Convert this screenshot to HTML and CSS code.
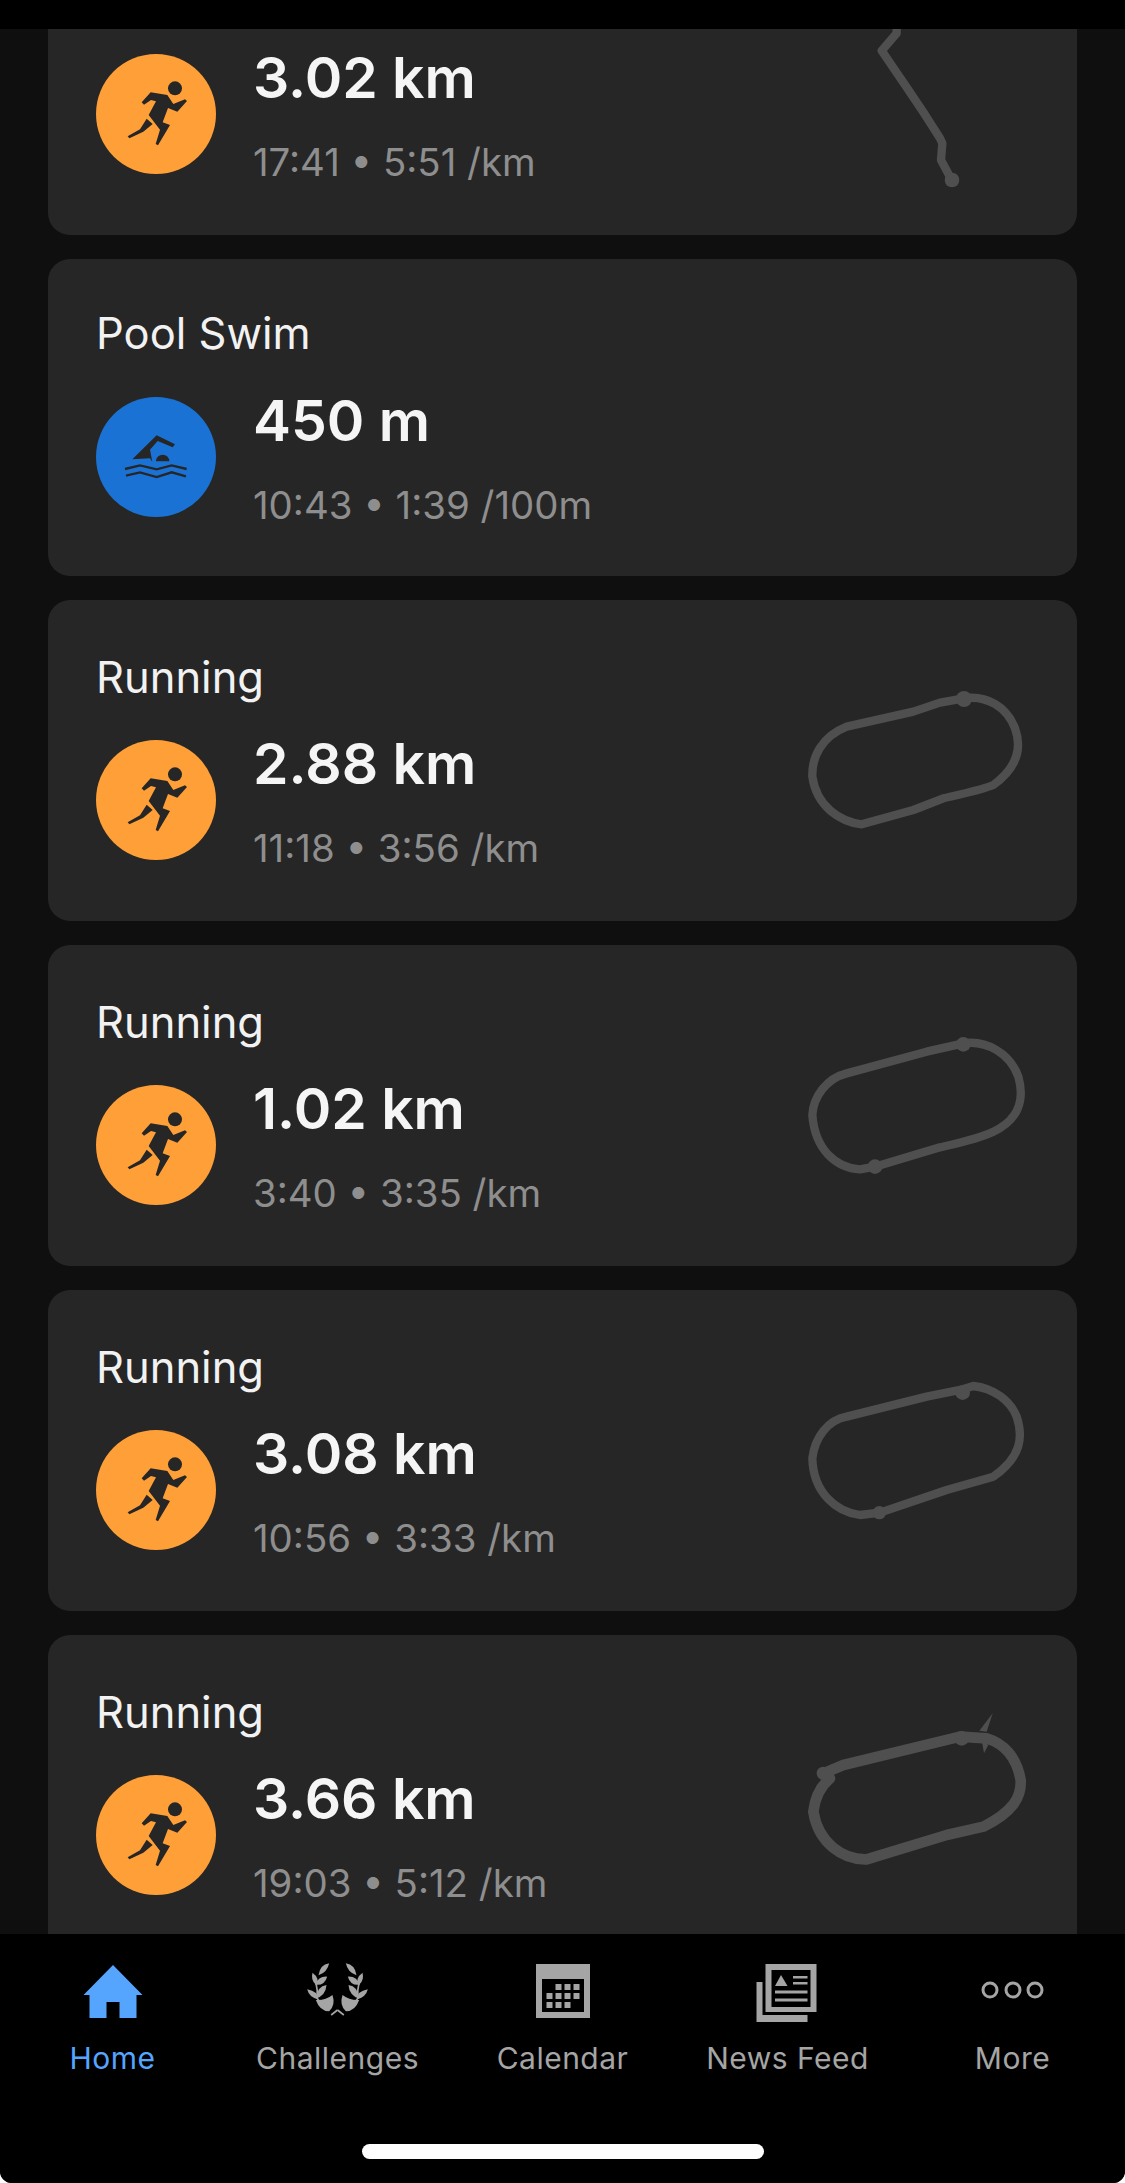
FILE: index.html
```html
<!DOCTYPE html>
<html lang="en">
<head>
    <meta charset="UTF-8">
    <meta name="viewport" content="width=device-width, initial-scale=1.0">
    <title>Activities</title>
    <link rel="stylesheet" href="styles.css">
</head>
<body>
    <svg class="defs" width="0" height="0" aria-hidden="true">
        <symbol id="runner" viewBox="18 30 360 360">
            <circle cx="255" cy="133" r="21"/>
            <path d="M155 175 L182 145 L232 153 L250 180 L285 166 L291 171 L262 203 L234 192 L218 235 L240 243 L204 304 L197 300 L210 257 L176 213 L198 172 L183 168 L162 182 Z"/>
            <path d="M170 224 L188 240 L160 263 L118 283 L113 277 L150 256 Z"/>
        </symbol>
        <symbol id="swimmer" viewBox="108 80 360 360">
            <path d="M217 267 L290 195 L345 222 L338 231 L293 212 L270 238 L277 275 L270 264 Z"/>
            <path d="M288 273 A20 20 0 0 1 328 273 Z"/>
            <path class="waves" d="M195 296 L240 285 L290 297 L335 285 L380 296 M198 316 L240 306 L290 320 L335 306 L378 318"/>
        </symbol>
        <g id="wreath-half">
            <path d="M116 40 Q88 44 84 76 Q110 68 116 40 Z"/>
            <path d="M66 68 Q60 90 76 104 Q90 86 66 68 Z"/>
            <path d="M110 80 Q84 78 74 104 Q102 108 110 80 Z"/>
            <path d="M50 118 Q56 142 82 148 Q84 124 50 118 Z"/>
            <path d="M108 105 Q80 108 76 146 Q106 136 108 105 Z"/>
            <path d="M126 135 Q104 152 76 150 Q88 184 116 184 Q136 165 126 135 Z"/>
            <path class="stem" d="M76 96 L80 120 L80 145 L95 165"/>
            <path class="stem" d="M122 195 L141 180"/>
        </g>
    </svg>

    <div class="app">
        <div class="status-bar"></div>

        <main class="feed">
            <div class="list">
                <article class="card card-first">
                    <div class="card-body">
                        <div class="badge badge-run"><svg><use href="#runner"/></svg></div>
                        <div class="stats">
                            <div class="distance">3.02 km</div>
                            <div class="meta">17:41 • 5:51 /km</div>
                        </div>
                    </div>
                    <svg class="route" viewBox="0 0 840 570">
                        <path d="M350 0 L350 178 L305 230 L380 340 L435 422 L480 493 L487 508 L483 558 L515 618"/>
                        <circle cx="516" cy="618" r="22"/>
                    </svg>
                </article>

                <article class="card card-swim">
                    <div class="card-title">Pool Swim</div>
                    <div class="card-body">
                        <div class="badge badge-swim"><svg><use href="#swimmer"/></svg></div>
                        <div class="stats">
                            <div class="distance">450 m</div>
                            <div class="meta">10:43 • 1:39 /100m</div>
                        </div>
                    </div>
                </article>

                <article class="card">
                    <div class="card-title">Running</div>
                    <div class="card-body">
                        <div class="badge badge-run"><svg><use href="#runner"/></svg></div>
                        <div class="stats">
                            <div class="distance">2.88 km</div>
                            <div class="meta">11:18 • 3:56 /km</div>
                        </div>
                    </div>
                    <svg class="route" viewBox="0 0 840 570">
                        <path d="M552 115 C620 105 680 140 705 205 C725 260 715 320 640 375 C600 392 540 402 490 415 L400 450 L245 493 C180 485 110 440 97 350 C95 290 125 230 200 200 L400 155 L480 128 Z"/>
                        <circle cx="552" cy="117" r="24"/>
                    </svg>
                </article>

                <article class="card">
                    <div class="card-title">Running</div>
                    <div class="card-body">
                        <div class="badge badge-run"><svg><use href="#runner"/></svg></div>
                        <div class="stats">
                            <div class="distance">1.02 km</div>
                            <div class="meta">3:40 • 3:35 /km</div>
                        </div>
                    </div>
                    <svg class="route" viewBox="0 -15 840 570">
                        <path d="M550 100 C620 90 690 130 715 200 C735 270 715 330 640 365 C600 385 540 398 480 412 L285 470 L240 478 C170 475 105 420 97 315 C100 260 140 205 200 190 L440 125 Z"/>
                        <circle cx="550" cy="103" r="22"/>
                        <circle cx="285" cy="470" r="22"/>
                    </svg>
                </article>

                <article class="card">
                    <div class="card-title">Running</div>
                    <div class="card-body">
                        <div class="badge badge-run"><svg><use href="#runner"/></svg></div>
                        <div class="stats">
                            <div class="distance">3.08 km</div>
                            <div class="meta">10:56 • 3:33 /km</div>
                        </div>
                    </div>
                    <svg class="route" viewBox="0 0 840 570">
                        <path d="M548 118 L580 108 C640 115 690 150 710 200 C730 260 725 320 640 380 L500 420 L300 488 L240 495 C170 485 100 430 97 325 C105 260 145 210 200 200 L440 140 Z"/>
                        <circle cx="548" cy="128" r="22"/>
                        <circle cx="298" cy="488" r="20"/>
                    </svg>
                </article>

                <article class="card">
                    <div class="card-title">Running</div>
                    <div class="card-body">
                        <div class="badge badge-run"><svg><use href="#runner"/></svg></div>
                        <div class="stats">
                            <div class="distance">3.66 km</div>
                            <div class="meta">19:03 • 5:12 /km</div>
                        </div>
                    </div>
                    <svg class="route route-thick" viewBox="0 15 840 570">
                        <path d="M130 250 L190 225 L540 140 L620 145 C670 160 710 200 722 270 C725 320 700 365 610 410 L500 435 L260 508 C190 510 115 460 100 365 C105 320 120 290 150 265 Z"/>
                        <circle cx="130" cy="250" r="20"/>
                        <circle cx="545" cy="145" r="22"/>
                        <polygon points="638,70 620,125 598,122"/>
                        <polygon points="605,150 612,190 625,165"/>
                    </svg>
                </article>
            </div>
        </main>

        <nav class="tabbar">
            <div class="tabs">
                <a class="tab tab-active">
                    <svg class="tab-icon" viewBox="0 0 70 60">
                        <path d="M35 3 L64.5 33 L58.5 33 L58.5 56 L41.5 56 L41.5 40 L28.5 40 L28.5 56 L11.5 56 L11.5 33 L5.5 33 Z"/>
                    </svg>
                    <span>Home</span>
                </a>
                <a class="tab">
                    <svg class="tab-icon" viewBox="37.5 36 210 180">
                        <use href="#wreath-half"/>
                        <use href="#wreath-half" transform="translate(282 0) scale(-1 1)"/>
                    </svg>
                    <span>Challenges</span>
                </a>
                <a class="tab">
                    <svg class="tab-icon" viewBox="0 0 70 60">
                        <path fill-rule="evenodd" d="M8 2 H62 V56 H8 Z M14 17 V50 H56 V17 Z"/>
                        <path d="M27.5 22h6v6h-6z M36.5 22h6v6h-6z M45.5 22h6v6h-6z M18.5 31h6v6h-6z M27.5 31h6v6h-6z M36.5 31h6v6h-6z M45.5 31h6v6h-6z M18.5 40h6v6h-6z M27.5 40h6v6h-6z M36.5 40h6v6h-6z"/>
                    </svg>
                    <span>Calendar</span>
                </a>
                <a class="tab">
                    <svg class="tab-icon" viewBox="0 0 70 60">
                        <path d="M3.5 20 h6 v33 h45 v7 h-51 Z"/>
                        <path fill-rule="evenodd" d="M12.5 2 H63.5 V50 H12.5 Z M18.5 8 V45 H57.5 V8 Z"/>
                        <path d="M28 13 L34.5 24 H22 Z"/>
                        <path d="M40 14h14.5v2.5H40z M40 20h14.5v2.5H40z M22 28.5h32.5v3H22z M22 36.5h32.5v3H22z"/>
                    </svg>
                    <span>News Feed</span>
                </a>
                <a class="tab">
                    <svg class="tab-icon tab-icon-more" viewBox="0 0 70 60">
                        <circle cx="12" cy="28" r="7"/>
                        <circle cx="35" cy="28" r="7"/>
                        <circle cx="57" cy="28" r="7"/>
                    </svg>
                    <span>More</span>
                </a>
            </div>
            <div class="home-indicator"></div>
        </nav>
    </div>
</body>
</html>
```

FILE: styles.css
```css
html, body {
    height: 100%;
    margin: 0;
    padding: 0;
    background-color: #fff;
}
body {
    font-family: Inter, "Noto Sans", sans-serif;
}
.defs {
    position: absolute;
}
.waves {
    fill: none;
    stroke: #262626;
    stroke-width: 7;
}
.stem {
    fill: none;
    stroke: #a5a5a5;
    stroke-width: 5;
}
.app {
    height: 100vh;
    display: flex;
    flex-direction: column;
    background-color: #000;
    border-radius: 0 0 12px 12px;
    overflow: hidden;
}
.status-bar {
    height: 29px;
    flex: none;
    background-color: #000;
}
.feed {
    flex: 1;
    min-height: 0;
    overflow: hidden;
    background-color: #0f0f0f;
}
.list {
    display: flex;
    flex-direction: column;
    gap: 24px;
    margin: 0 48px;
}
.card {
    position: relative;
    padding: 51px 48px 61px;
    background-color: #262626;
    border-radius: 22px;
}
.card-first {
    padding-top: 25px;
    border-radius: 0 0 22px 22px;
}
.card-swim {
    padding: 48px 48px 59px;
}
.card-title {
    height: 54px;
    line-height: 52px;
    margin-bottom: 35px;
    font-size: 43.5px;
    color: #f2f2f2;
}
.card-swim .card-title {
    margin-bottom: 36px;
}
.card-body {
    display: flex;
    gap: 37px;
    height: 120px;
}
.badge {
    width: 120px;
    height: 120px;
    flex: none;
    border-radius: 50%;
}
.badge svg {
    display: block;
    width: 120px;
    height: 120px;
    fill: #262626;
}
.badge-run {
    background-color: #ff9f38;
}
.badge-swim {
    background-color: #1a73d4;
}
.distance {
    height: 48px;
    line-height: 48px;
    font-size: 57px;
    font-weight: 600;
    color: #f5f5f5;
}
.meta {
    margin-top: 37px;
    line-height: 46px;
    font-size: 38.4px;
    color: #8e8e8e;
}
.route {
    position: absolute;
    top: 60px;
    right: 17px;
    width: 280px;
    height: 190px;
    overflow: visible;
    fill: #4f4f4f;
}
.card-first .route {
    top: -55px;
}
.route path {
    fill: none;
    stroke: #4f4f4f;
    stroke-width: 25;
    stroke-linejoin: round;
    stroke-linecap: round;
}
.route-thick path {
    stroke-width: 32;
}
.tabbar {
    height: 249px;
    flex: none;
    display: flex;
    flex-direction: column;
    background-color: #000;
}
.tabs {
    display: grid;
    grid-template-columns: repeat(5, 1fr);
    padding-top: 28px;
}
.tab {
    display: flex;
    flex-direction: column;
    align-items: center;
    font-size: 30px;
    line-height: 36px;
    letter-spacing: 0.5px;
    color: #a5a5a5;
}
.tab-icon {
    display: block;
    width: 70px;
    height: 60px;
    margin-bottom: 18px;
    fill: #a5a5a5;
}
.tab-icon-more {
    fill: none;
    stroke: #a5a5a5;
    stroke-width: 3;
}
.tab-active {
    color: #55a5ff;
}
.tab-active .tab-icon {
    fill: #55a5ff;
}
.home-indicator {
    width: 402px;
    height: 15px;
    margin: 68px auto 0;
    background-color: #fff;
    border-radius: 8px;
}
```
